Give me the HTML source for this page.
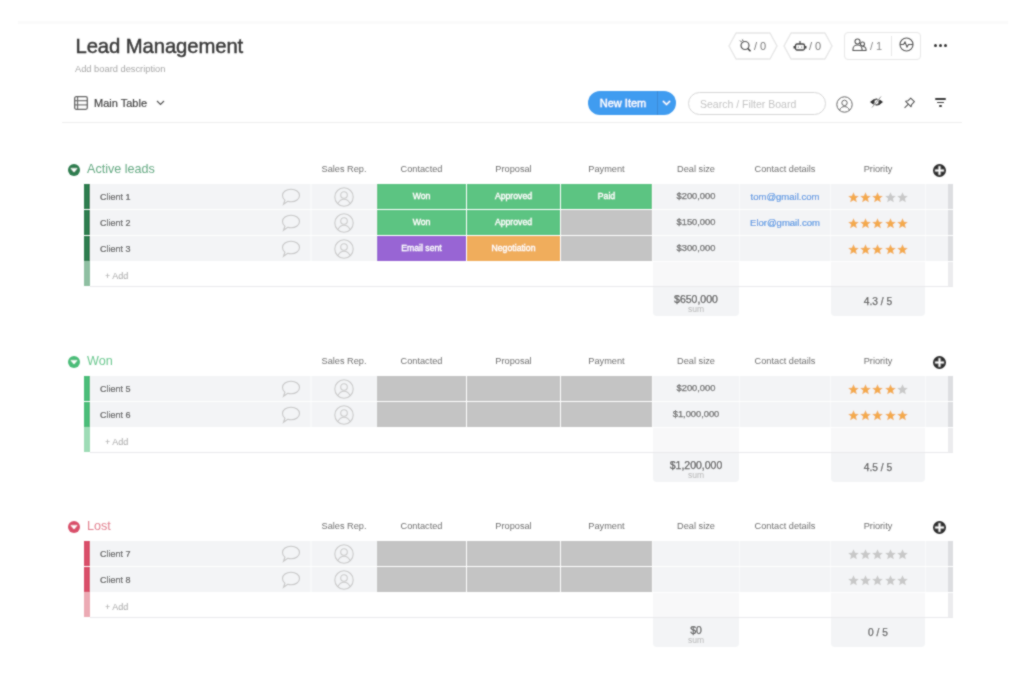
<!DOCTYPE html>
<html><head><meta charset="utf-8"><title>Lead Management</title>
<style>
html,body{margin:0;padding:0;}
body{width:1024px;height:690px;overflow:hidden;position:relative;background:#fff;font-family:"Liberation Sans", sans-serif;}
#wrap{position:absolute;left:0;top:0;width:1024px;height:690px;filter:url(#bl);}
.t{position:absolute;white-space:nowrap;line-height:1;}
.r{position:absolute;}
</style></head><body><svg width="0" height="0" style="position:absolute"><filter id="bl" x="0" y="0" width="100%" height="100%"><feConvolveMatrix order="3" kernelMatrix="1 2 1 2 10 2 1 2 1" edgeMode="duplicate"/></filter></svg><div id="wrap">
<div class="r" style="left:18px;top:21px;width:990px;height:3px;background:#fafafa;"></div>
<div class="t" style="left:75.5px;top:35.82px;font-size:20.3px;color:#3a3a3a;font-weight:400;-webkit-text-stroke:0.45px #3a3a3a;letter-spacing:-0.1px;">Lead Management</div>
<div class="t" style="left:75px;top:65.33px;font-size:9.3px;color:#a8a8a8;font-weight:400;">Add board description</div>
<svg class="r" style="left:728px;top:32px" width="50" height="28" viewBox="0 0 50 28"><polygon points="8,1 42,1 49,14.0 42,27 8,27 1,14.0" fill="none" stroke="#e6e6e6" stroke-width="1.4" stroke-linejoin="round"/></svg>
<svg class="r" style="left:783px;top:32px" width="50" height="28" viewBox="0 0 50 28"><polygon points="8,1 42,1 49,14.0 42,27 8,27 1,14.0" fill="none" stroke="#e6e6e6" stroke-width="1.4" stroke-linejoin="round"/></svg>
<svg class="r" style="left:738px;top:39px" width="14" height="14" viewBox="0 0 14 14"><circle cx="7" cy="6.5" r="4" fill="none" stroke="#555" stroke-width="1.2"/><line x1="9.8" y1="9.5" x2="12.5" y2="12.3" stroke="#444" stroke-width="1.6"/><path d="M3.5 3 L2 1.5 M5 2 L4.5 0.5" stroke="#555" stroke-width="1"/></svg>
<div class="t" style="left:754px;top:40.69px;font-size:11px;color:#777;font-weight:400;">/ 0</div>
<svg class="r" style="left:793px;top:39px" width="14" height="14" viewBox="0 0 14 14"><rect x="2.5" y="5" width="9" height="6" rx="1.5" fill="none" stroke="#444" stroke-width="1.3"/><line x1="7" y1="2" x2="7" y2="5" stroke="#444" stroke-width="1.2"/><rect x="0.5" y="7" width="2" height="2.5" fill="#444"/><rect x="11.5" y="7" width="2" height="2.5" fill="#444"/><circle cx="5.3" cy="8" r="0.6" fill="#444"/><circle cx="8.7" cy="8" r="0.6" fill="#444"/></svg>
<div class="t" style="left:809px;top:40.69px;font-size:11px;color:#777;font-weight:400;">/ 0</div>
<div class="r" style="left:844px;top:31.5px;width:77px;height:28px;background:transparent;border:1px solid #e6e6e6;border-radius:4px;box-sizing:border-box;"></div>
<div class="r" style="left:890.5px;top:35.5px;width:1px;height:20px;background:#e6e6e6;"></div>
<svg class="r" style="left:852px;top:38px" width="15" height="14" viewBox="0 0 15 14"><circle cx="5.5" cy="3.5" r="2.5" fill="none" stroke="#555" stroke-width="1.1"/><path d="M1 12.5 v-1.5 a4.5 4 0 0 1 9 0 v1.5 z" fill="none" stroke="#555" stroke-width="1.1"/><circle cx="10.5" cy="6" r="2" fill="none" stroke="#555" stroke-width="1.1"/><path d="M10 12.5 h4 v-1 a3 3 0 0 0 -3.5 -3" fill="none" stroke="#555" stroke-width="1.1"/></svg>
<div class="t" style="left:870px;top:40.69px;font-size:11px;color:#888;font-weight:400;">/ 1</div>
<svg class="r" style="left:898.5px;top:37px" width="15" height="15" viewBox="0 0 15 15"><circle cx="7.5" cy="7.5" r="6.5" fill="none" stroke="#555" stroke-width="1.1"/><path d="M1 7.5 H4.5 L6 5 L8 10 L9.5 7.5 H14" fill="none" stroke="#555" stroke-width="1.1"/></svg>
<div class="r" style="left:934.0px;top:43.5px;width:3px;height:3px;background:#333;border-radius:50%;"></div>
<div class="r" style="left:939.0px;top:43.5px;width:3px;height:3px;background:#333;border-radius:50%;"></div>
<div class="r" style="left:944.0px;top:43.5px;width:3px;height:3px;background:#333;border-radius:50%;"></div>
<svg class="r" style="left:74px;top:96px" width="14" height="14" viewBox="0 0 14 14"><rect x="0.7" y="0.7" width="12.6" height="12.6" rx="1.5" fill="none" stroke="#666" stroke-width="1.3"/><line x1="0.7" y1="4.7" x2="13.3" y2="4.7" stroke="#666" stroke-width="1.1"/><line x1="0.7" y1="8.9" x2="13.3" y2="8.9" stroke="#666" stroke-width="1.1"/><line x1="3.6" y1="0.7" x2="3.6" y2="13.3" stroke="#666" stroke-width="1.1"/></svg>
<div class="t" style="left:94px;top:98.19px;font-size:11px;color:#444;font-weight:400;-webkit-text-stroke:0.2px #444;">Main Table</div>
<svg class="r" style="left:156px;top:100px" width="9" height="6" viewBox="0 0 9 6"><path d="M1 1 L4.5 4.5 L8 1" fill="none" stroke="#555" stroke-width="1.2"/></svg>
<div class="r" style="left:62px;top:122px;width:900px;height:1px;background:#eeeeee;"></div>
<div class="r" style="left:588px;top:91px;width:88px;height:24px;background:#409cf0;border-radius:12px;"></div>
<div class="r" style="left:656.5px;top:91px;width:1px;height:24px;background:#3a8ad6;"></div>
<div class="t" style="left:589px;width:68px;text-align:center;top:98.19px;font-size:11px;color:#fff;font-weight:400;-webkit-text-stroke:0.3px #fff;">New Item</div>
<svg class="r" style="left:662px;top:100px" width="9" height="6" viewBox="0 0 9 6"><path d="M1 1 L4.5 4.5 L8 1" fill="none" stroke="#fff" stroke-width="1.5"/></svg>
<div class="r" style="left:688px;top:91.5px;width:138px;height:23px;background:#fff;border:1.5px solid #d6d6d6;border-radius:12px;box-sizing:border-box;"></div>
<div class="t" style="left:700px;top:98.61px;font-size:10.5px;color:#c2c2c2;font-weight:400;">Search / Filter Board</div>
<svg class="r" style="left:836px;top:96px" width="17" height="17" viewBox="0 0 17 17"><circle cx="8.5" cy="8.5" r="7.7" fill="none" stroke="#666" stroke-width="1"/><circle cx="8.5" cy="6.9" r="2.7" fill="none" stroke="#666" stroke-width="1"/><path d="M3.6 14.2 C4.5 11.6 6.3 10.6 8.5 10.6 C10.7 10.6 12.5 11.6 13.4 14.2" fill="none" stroke="#666" stroke-width="1"/></svg>
<svg class="r" style="left:869px;top:96px" width="15" height="12" viewBox="0 0 15 12"><path d="M1 6 Q7.5 -1 14 6 Q7.5 13 1 6 Z" fill="#333"/><circle cx="7.5" cy="6" r="2" fill="#fff"/><line x1="3" y1="11.5" x2="12" y2="0.5" stroke="#fff" stroke-width="1.4"/><line x1="3" y1="11.5" x2="12" y2="0.5" stroke="#666" stroke-width="0.7"/></svg>
<svg class="r" style="left:901px;top:96.5px" width="16" height="14" viewBox="0 0 16 14"><g transform="translate(7.1,7.3) rotate(45)"><path d="M-2.6 -6.3 H2.6 V-2.3 L3.9 -0.4 H-3.9 L-2.6 -2.3 Z" fill="none" stroke="#555" stroke-width="1.05" stroke-linejoin="round"/><line x1="0" y1="-0.4" x2="0" y2="5" stroke="#555" stroke-width="1.05"/></g></svg>
<div class="r" style="left:935px;top:98px;width:11px;height:2px;background:#3a3a3a;border-radius:1px;"></div>
<div class="r" style="left:937px;top:101.7px;width:7px;height:1.8px;background:#3a3a3a;border-radius:1px;"></div>
<div class="r" style="left:939px;top:105.2px;width:3px;height:1.8px;background:#3a3a3a;border-radius:1px;"></div>
<svg class="r" style="left:67.5px;top:163.5px" width="12" height="12" viewBox="0 0 12 12"><circle cx="6" cy="6" r="6" fill="#2e7d4f"/><path d="M2.9 4.4 H9.1 L6 8 Z" fill="#fff" stroke="#fff" stroke-width="0.5" stroke-linejoin="round"/></svg>
<div class="t" style="left:87px;top:162.83px;font-size:12.6px;color:#66aa84;font-weight:400;">Active leads</div>
<div class="t" style="left:311px;width:66px;text-align:center;top:165.01px;font-size:9.2px;color:#707070;font-weight:400;">Sales Rep.</div>
<div class="t" style="left:377px;width:89px;text-align:center;top:165.01px;font-size:9.2px;color:#707070;font-weight:400;">Contacted</div>
<div class="t" style="left:467px;width:93px;text-align:center;top:165.01px;font-size:9.2px;color:#707070;font-weight:400;">Proposal</div>
<div class="t" style="left:561px;width:91px;text-align:center;top:165.01px;font-size:9.2px;color:#707070;font-weight:400;">Payment</div>
<div class="t" style="left:653px;width:86px;text-align:center;top:165.01px;font-size:9.2px;color:#707070;font-weight:400;">Deal size</div>
<div class="t" style="left:740px;width:90px;text-align:center;top:165.01px;font-size:9.2px;color:#707070;font-weight:400;">Contact details</div>
<div class="t" style="left:831px;width:94px;text-align:center;top:165.01px;font-size:9.2px;color:#707070;font-weight:400;">Priority</div>
<svg class="r" style="left:933px;top:163.5px" width="13" height="13" viewBox="0 0 13 13"><circle cx="6.5" cy="6.5" r="6.5" fill="#2f2f2f"/><path d="M6.5 2.2 V10.8 M2.2 6.5 H10.8" stroke="#fff" stroke-width="2"/></svg>
<div class="r" style="left:84px;top:184px;width:6px;height:25px;background:#2e7d4f;"></div>
<div class="r" style="left:90px;top:184px;width:287px;height:25px;background:#f3f4f6;"></div>
<div class="r" style="left:310px;top:184px;width:1.5px;height:25px;background:#f8f9fa;"></div>
<div class="r" style="left:377px;top:184px;width:89px;height:25px;background:#5bc482;"></div>
<div class="t" style="left:377px;width:89px;text-align:center;top:192.14px;font-size:8.7px;color:#fff;font-weight:400;-webkit-text-stroke:0.3px #fff;">Won</div>
<div class="r" style="left:467px;top:184px;width:93px;height:25px;background:#5bc482;"></div>
<div class="t" style="left:467px;width:93px;text-align:center;top:192.14px;font-size:8.7px;color:#fff;font-weight:400;-webkit-text-stroke:0.3px #fff;">Approved</div>
<div class="r" style="left:561px;top:184px;width:91px;height:25px;background:#5bc482;"></div>
<div class="t" style="left:561px;width:91px;text-align:center;top:192.14px;font-size:8.7px;color:#fff;font-weight:400;-webkit-text-stroke:0.3px #fff;">Paid</div>
<div class="r" style="left:652px;top:184px;width:296px;height:25px;background:#f3f4f6;"></div>
<div class="r" style="left:652px;top:184px;width:1px;height:25px;background:#fafafb;"></div>
<div class="r" style="left:739px;top:184px;width:1px;height:25px;background:#fafafb;"></div>
<div class="r" style="left:830px;top:184px;width:1px;height:25px;background:#fafafb;"></div>
<div class="r" style="left:925px;top:184px;width:1px;height:25px;background:#fafafb;"></div>
<div class="r" style="left:948px;top:184px;width:5px;height:25px;background:#dddee1;"></div>
<div class="t" style="left:100px;top:192.98px;font-size:9px;color:#4a4a4a;font-weight:400;-webkit-text-stroke:0.2px #4a4a4a;">Client 1</div>
<svg class="r" style="left:281px;top:188px" width="20" height="18" viewBox="0 0 20 18"><path d="M10 1.2 C14.8 1.2 18.5 3.9 18.5 7.5 C18.5 11.1 14.8 13.8 10 13.8 C8.8 13.8 7.7 13.6 6.7 13.3 L2.5 16.3 L3.9 12.2 C2.4 11.1 1.5 9.4 1.5 7.5 C1.5 3.9 5.2 1.2 10 1.2 Z" fill="none" stroke="#c6c6c6" stroke-width="1.1"/></svg>
<svg class="r" style="left:333.5px;top:186.5px" width="20" height="20" viewBox="0 0 20 20"><circle cx="10" cy="10" r="9.2" fill="none" stroke="#cacaca" stroke-width="1.1"/><circle cx="10" cy="8" r="3.3" fill="none" stroke="#cacaca" stroke-width="1.1"/><path d="M4.2 16.3 C5.5 13.3 7.5 12.3 10 12.3 C12.5 12.3 14.5 13.3 15.8 16.3" fill="none" stroke="#cacaca" stroke-width="1.1"/></svg>
<div class="t" style="left:653px;width:86px;text-align:center;top:191.93px;font-size:9.3px;color:#666;font-weight:400;-webkit-text-stroke:0.25px #666;">$200,000</div>
<div class="t" style="left:740px;width:90px;text-align:center;top:191.76px;font-size:9.5px;color:#4a90e2;font-weight:400;-webkit-text-stroke:0.15px #4a90e2;">tom@gmail.com</div>
<svg class="r" style="left:847.5px;top:191.5px" width="11" height="11" viewBox="0 0 11 11"><path d="M5.5 0.3 L7.05 3.75 L10.8 4.1 L7.95 6.6 L8.8 10.3 L5.5 8.35 L2.2 10.3 L3.05 6.6 L0.2 4.1 L3.95 3.75 Z" fill="#f3aa4e"/></svg>
<svg class="r" style="left:859.95px;top:191.5px" width="11" height="11" viewBox="0 0 11 11"><path d="M5.5 0.3 L7.05 3.75 L10.8 4.1 L7.95 6.6 L8.8 10.3 L5.5 8.35 L2.2 10.3 L3.05 6.6 L0.2 4.1 L3.95 3.75 Z" fill="#f3aa4e"/></svg>
<svg class="r" style="left:872.4px;top:191.5px" width="11" height="11" viewBox="0 0 11 11"><path d="M5.5 0.3 L7.05 3.75 L10.8 4.1 L7.95 6.6 L8.8 10.3 L5.5 8.35 L2.2 10.3 L3.05 6.6 L0.2 4.1 L3.95 3.75 Z" fill="#f3aa4e"/></svg>
<svg class="r" style="left:884.85px;top:191.5px" width="11" height="11" viewBox="0 0 11 11"><path d="M5.5 0.3 L7.05 3.75 L10.8 4.1 L7.95 6.6 L8.8 10.3 L5.5 8.35 L2.2 10.3 L3.05 6.6 L0.2 4.1 L3.95 3.75 Z" fill="#c8c8c8"/></svg>
<svg class="r" style="left:897.3px;top:191.5px" width="11" height="11" viewBox="0 0 11 11"><path d="M5.5 0.3 L7.05 3.75 L10.8 4.1 L7.95 6.6 L8.8 10.3 L5.5 8.35 L2.2 10.3 L3.05 6.6 L0.2 4.1 L3.95 3.75 Z" fill="#c8c8c8"/></svg>
<div class="r" style="left:84px;top:210px;width:6px;height:25px;background:#2e7d4f;"></div>
<div class="r" style="left:90px;top:210px;width:287px;height:25px;background:#f3f4f6;"></div>
<div class="r" style="left:310px;top:210px;width:1.5px;height:25px;background:#f8f9fa;"></div>
<div class="r" style="left:377px;top:210px;width:89px;height:25px;background:#5bc482;"></div>
<div class="t" style="left:377px;width:89px;text-align:center;top:218.14px;font-size:8.7px;color:#fff;font-weight:400;-webkit-text-stroke:0.3px #fff;">Won</div>
<div class="r" style="left:467px;top:210px;width:93px;height:25px;background:#5bc482;"></div>
<div class="t" style="left:467px;width:93px;text-align:center;top:218.14px;font-size:8.7px;color:#fff;font-weight:400;-webkit-text-stroke:0.3px #fff;">Approved</div>
<div class="r" style="left:561px;top:210px;width:91px;height:25px;background:#c4c4c4;"></div>
<div class="r" style="left:652px;top:210px;width:296px;height:25px;background:#f3f4f6;"></div>
<div class="r" style="left:652px;top:210px;width:1px;height:25px;background:#fafafb;"></div>
<div class="r" style="left:739px;top:210px;width:1px;height:25px;background:#fafafb;"></div>
<div class="r" style="left:830px;top:210px;width:1px;height:25px;background:#fafafb;"></div>
<div class="r" style="left:925px;top:210px;width:1px;height:25px;background:#fafafb;"></div>
<div class="r" style="left:948px;top:210px;width:5px;height:25px;background:#dddee1;"></div>
<div class="t" style="left:100px;top:218.98px;font-size:9px;color:#4a4a4a;font-weight:400;-webkit-text-stroke:0.2px #4a4a4a;">Client 2</div>
<svg class="r" style="left:281px;top:214px" width="20" height="18" viewBox="0 0 20 18"><path d="M10 1.2 C14.8 1.2 18.5 3.9 18.5 7.5 C18.5 11.1 14.8 13.8 10 13.8 C8.8 13.8 7.7 13.6 6.7 13.3 L2.5 16.3 L3.9 12.2 C2.4 11.1 1.5 9.4 1.5 7.5 C1.5 3.9 5.2 1.2 10 1.2 Z" fill="none" stroke="#c6c6c6" stroke-width="1.1"/></svg>
<svg class="r" style="left:333.5px;top:212.5px" width="20" height="20" viewBox="0 0 20 20"><circle cx="10" cy="10" r="9.2" fill="none" stroke="#cacaca" stroke-width="1.1"/><circle cx="10" cy="8" r="3.3" fill="none" stroke="#cacaca" stroke-width="1.1"/><path d="M4.2 16.3 C5.5 13.3 7.5 12.3 10 12.3 C12.5 12.3 14.5 13.3 15.8 16.3" fill="none" stroke="#cacaca" stroke-width="1.1"/></svg>
<div class="t" style="left:653px;width:86px;text-align:center;top:217.93px;font-size:9.3px;color:#666;font-weight:400;-webkit-text-stroke:0.25px #666;">$150,000</div>
<div class="t" style="left:740px;width:90px;text-align:center;top:217.76px;font-size:9.5px;color:#4a90e2;font-weight:400;-webkit-text-stroke:0.15px #4a90e2;">Elor@gmail.com</div>
<svg class="r" style="left:847.5px;top:217.5px" width="11" height="11" viewBox="0 0 11 11"><path d="M5.5 0.3 L7.05 3.75 L10.8 4.1 L7.95 6.6 L8.8 10.3 L5.5 8.35 L2.2 10.3 L3.05 6.6 L0.2 4.1 L3.95 3.75 Z" fill="#f3aa4e"/></svg>
<svg class="r" style="left:859.95px;top:217.5px" width="11" height="11" viewBox="0 0 11 11"><path d="M5.5 0.3 L7.05 3.75 L10.8 4.1 L7.95 6.6 L8.8 10.3 L5.5 8.35 L2.2 10.3 L3.05 6.6 L0.2 4.1 L3.95 3.75 Z" fill="#f3aa4e"/></svg>
<svg class="r" style="left:872.4px;top:217.5px" width="11" height="11" viewBox="0 0 11 11"><path d="M5.5 0.3 L7.05 3.75 L10.8 4.1 L7.95 6.6 L8.8 10.3 L5.5 8.35 L2.2 10.3 L3.05 6.6 L0.2 4.1 L3.95 3.75 Z" fill="#f3aa4e"/></svg>
<svg class="r" style="left:884.85px;top:217.5px" width="11" height="11" viewBox="0 0 11 11"><path d="M5.5 0.3 L7.05 3.75 L10.8 4.1 L7.95 6.6 L8.8 10.3 L5.5 8.35 L2.2 10.3 L3.05 6.6 L0.2 4.1 L3.95 3.75 Z" fill="#f3aa4e"/></svg>
<svg class="r" style="left:897.3px;top:217.5px" width="11" height="11" viewBox="0 0 11 11"><path d="M5.5 0.3 L7.05 3.75 L10.8 4.1 L7.95 6.6 L8.8 10.3 L5.5 8.35 L2.2 10.3 L3.05 6.6 L0.2 4.1 L3.95 3.75 Z" fill="#f3aa4e"/></svg>
<div class="r" style="left:84px;top:236px;width:6px;height:25px;background:#2e7d4f;"></div>
<div class="r" style="left:90px;top:236px;width:287px;height:25px;background:#f3f4f6;"></div>
<div class="r" style="left:310px;top:236px;width:1.5px;height:25px;background:#f8f9fa;"></div>
<div class="r" style="left:377px;top:236px;width:89px;height:25px;background:#9865d4;"></div>
<div class="t" style="left:377px;width:89px;text-align:center;top:244.14px;font-size:8.7px;color:#fff;font-weight:400;-webkit-text-stroke:0.3px #fff;">Email sent</div>
<div class="r" style="left:467px;top:236px;width:93px;height:25px;background:#f0ad5b;"></div>
<div class="t" style="left:467px;width:93px;text-align:center;top:244.14px;font-size:8.7px;color:#fff;font-weight:400;-webkit-text-stroke:0.3px #fff;">Negotiation</div>
<div class="r" style="left:561px;top:236px;width:91px;height:25px;background:#c4c4c4;"></div>
<div class="r" style="left:652px;top:236px;width:296px;height:25px;background:#f3f4f6;"></div>
<div class="r" style="left:652px;top:236px;width:1px;height:25px;background:#fafafb;"></div>
<div class="r" style="left:739px;top:236px;width:1px;height:25px;background:#fafafb;"></div>
<div class="r" style="left:830px;top:236px;width:1px;height:25px;background:#fafafb;"></div>
<div class="r" style="left:925px;top:236px;width:1px;height:25px;background:#fafafb;"></div>
<div class="r" style="left:948px;top:236px;width:5px;height:25px;background:#dddee1;"></div>
<div class="t" style="left:100px;top:244.98px;font-size:9px;color:#4a4a4a;font-weight:400;-webkit-text-stroke:0.2px #4a4a4a;">Client 3</div>
<svg class="r" style="left:281px;top:240px" width="20" height="18" viewBox="0 0 20 18"><path d="M10 1.2 C14.8 1.2 18.5 3.9 18.5 7.5 C18.5 11.1 14.8 13.8 10 13.8 C8.8 13.8 7.7 13.6 6.7 13.3 L2.5 16.3 L3.9 12.2 C2.4 11.1 1.5 9.4 1.5 7.5 C1.5 3.9 5.2 1.2 10 1.2 Z" fill="none" stroke="#c6c6c6" stroke-width="1.1"/></svg>
<svg class="r" style="left:333.5px;top:238.5px" width="20" height="20" viewBox="0 0 20 20"><circle cx="10" cy="10" r="9.2" fill="none" stroke="#cacaca" stroke-width="1.1"/><circle cx="10" cy="8" r="3.3" fill="none" stroke="#cacaca" stroke-width="1.1"/><path d="M4.2 16.3 C5.5 13.3 7.5 12.3 10 12.3 C12.5 12.3 14.5 13.3 15.8 16.3" fill="none" stroke="#cacaca" stroke-width="1.1"/></svg>
<div class="t" style="left:653px;width:86px;text-align:center;top:243.93px;font-size:9.3px;color:#666;font-weight:400;-webkit-text-stroke:0.25px #666;">$300,000</div>
<svg class="r" style="left:847.5px;top:243.5px" width="11" height="11" viewBox="0 0 11 11"><path d="M5.5 0.3 L7.05 3.75 L10.8 4.1 L7.95 6.6 L8.8 10.3 L5.5 8.35 L2.2 10.3 L3.05 6.6 L0.2 4.1 L3.95 3.75 Z" fill="#f3aa4e"/></svg>
<svg class="r" style="left:859.95px;top:243.5px" width="11" height="11" viewBox="0 0 11 11"><path d="M5.5 0.3 L7.05 3.75 L10.8 4.1 L7.95 6.6 L8.8 10.3 L5.5 8.35 L2.2 10.3 L3.05 6.6 L0.2 4.1 L3.95 3.75 Z" fill="#f3aa4e"/></svg>
<svg class="r" style="left:872.4px;top:243.5px" width="11" height="11" viewBox="0 0 11 11"><path d="M5.5 0.3 L7.05 3.75 L10.8 4.1 L7.95 6.6 L8.8 10.3 L5.5 8.35 L2.2 10.3 L3.05 6.6 L0.2 4.1 L3.95 3.75 Z" fill="#f3aa4e"/></svg>
<svg class="r" style="left:884.85px;top:243.5px" width="11" height="11" viewBox="0 0 11 11"><path d="M5.5 0.3 L7.05 3.75 L10.8 4.1 L7.95 6.6 L8.8 10.3 L5.5 8.35 L2.2 10.3 L3.05 6.6 L0.2 4.1 L3.95 3.75 Z" fill="#f3aa4e"/></svg>
<svg class="r" style="left:897.3px;top:243.5px" width="11" height="11" viewBox="0 0 11 11"><path d="M5.5 0.3 L7.05 3.75 L10.8 4.1 L7.95 6.6 L8.8 10.3 L5.5 8.35 L2.2 10.3 L3.05 6.6 L0.2 4.1 L3.95 3.75 Z" fill="#f3aa4e"/></svg>
<div class="r" style="left:84px;top:261px;width:6px;height:25px;background:#8fbfa2;"></div>
<div class="r" style="left:653px;top:262px;width:86px;height:24px;background:#f8f8f9;"></div>
<div class="r" style="left:831px;top:262px;width:94px;height:24px;background:#f8f8f9;"></div>
<div class="r" style="left:948px;top:262px;width:5px;height:24px;background:#ececee;"></div>
<div class="t" style="left:105px;top:271.68px;font-size:9px;color:#a8a8a8;font-weight:400;">+ Add</div>
<div class="r" style="left:90px;top:286px;width:863px;height:1px;background:#e9e9eb;"></div>
<div class="r" style="left:653px;top:287px;width:86px;height:29px;background:#f3f4f6;border-radius:0 0 4px 4px;"></div>
<div class="r" style="left:831px;top:287px;width:94px;height:29px;background:#f3f4f6;border-radius:0 0 4px 4px;"></div>
<div class="t" style="left:653px;width:86px;text-align:center;top:293.51px;font-size:10.5px;color:#555;font-weight:400;-webkit-text-stroke:0.25px #555;">$650,000</div>
<div class="t" style="left:653px;width:86px;text-align:center;top:304.80px;font-size:8.5px;color:#b5b5b5;font-weight:400;">sum</div>
<div class="t" style="left:831px;width:94px;text-align:center;top:296.87px;font-size:10.2px;color:#555;font-weight:400;-webkit-text-stroke:0.25px #555;">4.3 / 5</div>
<svg class="r" style="left:67.5px;top:355.5px" width="12" height="12" viewBox="0 0 12 12"><circle cx="6" cy="6" r="6" fill="#4cbd79"/><path d="M2.9 4.4 H9.1 L6 8 Z" fill="#fff" stroke="#fff" stroke-width="0.5" stroke-linejoin="round"/></svg>
<div class="t" style="left:87px;top:354.83px;font-size:12.6px;color:#6cc890;font-weight:400;">Won</div>
<div class="t" style="left:311px;width:66px;text-align:center;top:357.01px;font-size:9.2px;color:#707070;font-weight:400;">Sales Rep.</div>
<div class="t" style="left:377px;width:89px;text-align:center;top:357.01px;font-size:9.2px;color:#707070;font-weight:400;">Contacted</div>
<div class="t" style="left:467px;width:93px;text-align:center;top:357.01px;font-size:9.2px;color:#707070;font-weight:400;">Proposal</div>
<div class="t" style="left:561px;width:91px;text-align:center;top:357.01px;font-size:9.2px;color:#707070;font-weight:400;">Payment</div>
<div class="t" style="left:653px;width:86px;text-align:center;top:357.01px;font-size:9.2px;color:#707070;font-weight:400;">Deal size</div>
<div class="t" style="left:740px;width:90px;text-align:center;top:357.01px;font-size:9.2px;color:#707070;font-weight:400;">Contact details</div>
<div class="t" style="left:831px;width:94px;text-align:center;top:357.01px;font-size:9.2px;color:#707070;font-weight:400;">Priority</div>
<svg class="r" style="left:933px;top:355.5px" width="13" height="13" viewBox="0 0 13 13"><circle cx="6.5" cy="6.5" r="6.5" fill="#2f2f2f"/><path d="M6.5 2.2 V10.8 M2.2 6.5 H10.8" stroke="#fff" stroke-width="2"/></svg>
<div class="r" style="left:84px;top:376px;width:6px;height:25px;background:#4cbd79;"></div>
<div class="r" style="left:90px;top:376px;width:287px;height:25px;background:#f3f4f6;"></div>
<div class="r" style="left:310px;top:376px;width:1.5px;height:25px;background:#f8f9fa;"></div>
<div class="r" style="left:377px;top:376px;width:89px;height:25px;background:#c4c4c4;"></div>
<div class="r" style="left:467px;top:376px;width:93px;height:25px;background:#c4c4c4;"></div>
<div class="r" style="left:561px;top:376px;width:91px;height:25px;background:#c4c4c4;"></div>
<div class="r" style="left:652px;top:376px;width:296px;height:25px;background:#f3f4f6;"></div>
<div class="r" style="left:652px;top:376px;width:1px;height:25px;background:#fafafb;"></div>
<div class="r" style="left:739px;top:376px;width:1px;height:25px;background:#fafafb;"></div>
<div class="r" style="left:830px;top:376px;width:1px;height:25px;background:#fafafb;"></div>
<div class="r" style="left:925px;top:376px;width:1px;height:25px;background:#fafafb;"></div>
<div class="r" style="left:948px;top:376px;width:5px;height:25px;background:#dddee1;"></div>
<div class="t" style="left:100px;top:384.98px;font-size:9px;color:#4a4a4a;font-weight:400;-webkit-text-stroke:0.2px #4a4a4a;">Client 5</div>
<svg class="r" style="left:281px;top:380px" width="20" height="18" viewBox="0 0 20 18"><path d="M10 1.2 C14.8 1.2 18.5 3.9 18.5 7.5 C18.5 11.1 14.8 13.8 10 13.8 C8.8 13.8 7.7 13.6 6.7 13.3 L2.5 16.3 L3.9 12.2 C2.4 11.1 1.5 9.4 1.5 7.5 C1.5 3.9 5.2 1.2 10 1.2 Z" fill="none" stroke="#c6c6c6" stroke-width="1.1"/></svg>
<svg class="r" style="left:333.5px;top:378.5px" width="20" height="20" viewBox="0 0 20 20"><circle cx="10" cy="10" r="9.2" fill="none" stroke="#cacaca" stroke-width="1.1"/><circle cx="10" cy="8" r="3.3" fill="none" stroke="#cacaca" stroke-width="1.1"/><path d="M4.2 16.3 C5.5 13.3 7.5 12.3 10 12.3 C12.5 12.3 14.5 13.3 15.8 16.3" fill="none" stroke="#cacaca" stroke-width="1.1"/></svg>
<div class="t" style="left:653px;width:86px;text-align:center;top:383.93px;font-size:9.3px;color:#666;font-weight:400;-webkit-text-stroke:0.25px #666;">$200,000</div>
<svg class="r" style="left:847.5px;top:383.5px" width="11" height="11" viewBox="0 0 11 11"><path d="M5.5 0.3 L7.05 3.75 L10.8 4.1 L7.95 6.6 L8.8 10.3 L5.5 8.35 L2.2 10.3 L3.05 6.6 L0.2 4.1 L3.95 3.75 Z" fill="#f3aa4e"/></svg>
<svg class="r" style="left:859.95px;top:383.5px" width="11" height="11" viewBox="0 0 11 11"><path d="M5.5 0.3 L7.05 3.75 L10.8 4.1 L7.95 6.6 L8.8 10.3 L5.5 8.35 L2.2 10.3 L3.05 6.6 L0.2 4.1 L3.95 3.75 Z" fill="#f3aa4e"/></svg>
<svg class="r" style="left:872.4px;top:383.5px" width="11" height="11" viewBox="0 0 11 11"><path d="M5.5 0.3 L7.05 3.75 L10.8 4.1 L7.95 6.6 L8.8 10.3 L5.5 8.35 L2.2 10.3 L3.05 6.6 L0.2 4.1 L3.95 3.75 Z" fill="#f3aa4e"/></svg>
<svg class="r" style="left:884.85px;top:383.5px" width="11" height="11" viewBox="0 0 11 11"><path d="M5.5 0.3 L7.05 3.75 L10.8 4.1 L7.95 6.6 L8.8 10.3 L5.5 8.35 L2.2 10.3 L3.05 6.6 L0.2 4.1 L3.95 3.75 Z" fill="#f3aa4e"/></svg>
<svg class="r" style="left:897.3px;top:383.5px" width="11" height="11" viewBox="0 0 11 11"><path d="M5.5 0.3 L7.05 3.75 L10.8 4.1 L7.95 6.6 L8.8 10.3 L5.5 8.35 L2.2 10.3 L3.05 6.6 L0.2 4.1 L3.95 3.75 Z" fill="#c8c8c8"/></svg>
<div class="r" style="left:84px;top:402px;width:6px;height:25px;background:#4cbd79;"></div>
<div class="r" style="left:90px;top:402px;width:287px;height:25px;background:#f3f4f6;"></div>
<div class="r" style="left:310px;top:402px;width:1.5px;height:25px;background:#f8f9fa;"></div>
<div class="r" style="left:377px;top:402px;width:89px;height:25px;background:#c4c4c4;"></div>
<div class="r" style="left:467px;top:402px;width:93px;height:25px;background:#c4c4c4;"></div>
<div class="r" style="left:561px;top:402px;width:91px;height:25px;background:#c4c4c4;"></div>
<div class="r" style="left:652px;top:402px;width:296px;height:25px;background:#f3f4f6;"></div>
<div class="r" style="left:652px;top:402px;width:1px;height:25px;background:#fafafb;"></div>
<div class="r" style="left:739px;top:402px;width:1px;height:25px;background:#fafafb;"></div>
<div class="r" style="left:830px;top:402px;width:1px;height:25px;background:#fafafb;"></div>
<div class="r" style="left:925px;top:402px;width:1px;height:25px;background:#fafafb;"></div>
<div class="r" style="left:948px;top:402px;width:5px;height:25px;background:#dddee1;"></div>
<div class="t" style="left:100px;top:410.98px;font-size:9px;color:#4a4a4a;font-weight:400;-webkit-text-stroke:0.2px #4a4a4a;">Client 6</div>
<svg class="r" style="left:281px;top:406px" width="20" height="18" viewBox="0 0 20 18"><path d="M10 1.2 C14.8 1.2 18.5 3.9 18.5 7.5 C18.5 11.1 14.8 13.8 10 13.8 C8.8 13.8 7.7 13.6 6.7 13.3 L2.5 16.3 L3.9 12.2 C2.4 11.1 1.5 9.4 1.5 7.5 C1.5 3.9 5.2 1.2 10 1.2 Z" fill="none" stroke="#c6c6c6" stroke-width="1.1"/></svg>
<svg class="r" style="left:333.5px;top:404.5px" width="20" height="20" viewBox="0 0 20 20"><circle cx="10" cy="10" r="9.2" fill="none" stroke="#cacaca" stroke-width="1.1"/><circle cx="10" cy="8" r="3.3" fill="none" stroke="#cacaca" stroke-width="1.1"/><path d="M4.2 16.3 C5.5 13.3 7.5 12.3 10 12.3 C12.5 12.3 14.5 13.3 15.8 16.3" fill="none" stroke="#cacaca" stroke-width="1.1"/></svg>
<div class="t" style="left:653px;width:86px;text-align:center;top:409.93px;font-size:9.3px;color:#666;font-weight:400;-webkit-text-stroke:0.25px #666;">$1,000,000</div>
<svg class="r" style="left:847.5px;top:409.5px" width="11" height="11" viewBox="0 0 11 11"><path d="M5.5 0.3 L7.05 3.75 L10.8 4.1 L7.95 6.6 L8.8 10.3 L5.5 8.35 L2.2 10.3 L3.05 6.6 L0.2 4.1 L3.95 3.75 Z" fill="#f3aa4e"/></svg>
<svg class="r" style="left:859.95px;top:409.5px" width="11" height="11" viewBox="0 0 11 11"><path d="M5.5 0.3 L7.05 3.75 L10.8 4.1 L7.95 6.6 L8.8 10.3 L5.5 8.35 L2.2 10.3 L3.05 6.6 L0.2 4.1 L3.95 3.75 Z" fill="#f3aa4e"/></svg>
<svg class="r" style="left:872.4px;top:409.5px" width="11" height="11" viewBox="0 0 11 11"><path d="M5.5 0.3 L7.05 3.75 L10.8 4.1 L7.95 6.6 L8.8 10.3 L5.5 8.35 L2.2 10.3 L3.05 6.6 L0.2 4.1 L3.95 3.75 Z" fill="#f3aa4e"/></svg>
<svg class="r" style="left:884.85px;top:409.5px" width="11" height="11" viewBox="0 0 11 11"><path d="M5.5 0.3 L7.05 3.75 L10.8 4.1 L7.95 6.6 L8.8 10.3 L5.5 8.35 L2.2 10.3 L3.05 6.6 L0.2 4.1 L3.95 3.75 Z" fill="#f3aa4e"/></svg>
<svg class="r" style="left:897.3px;top:409.5px" width="11" height="11" viewBox="0 0 11 11"><path d="M5.5 0.3 L7.05 3.75 L10.8 4.1 L7.95 6.6 L8.8 10.3 L5.5 8.35 L2.2 10.3 L3.05 6.6 L0.2 4.1 L3.95 3.75 Z" fill="#f3aa4e"/></svg>
<div class="r" style="left:84px;top:427px;width:6px;height:25px;background:#9edcb6;"></div>
<div class="r" style="left:653px;top:428px;width:86px;height:24px;background:#f8f8f9;"></div>
<div class="r" style="left:831px;top:428px;width:94px;height:24px;background:#f8f8f9;"></div>
<div class="r" style="left:948px;top:428px;width:5px;height:24px;background:#ececee;"></div>
<div class="t" style="left:105px;top:437.68px;font-size:9px;color:#a8a8a8;font-weight:400;">+ Add</div>
<div class="r" style="left:90px;top:452px;width:863px;height:1px;background:#e9e9eb;"></div>
<div class="r" style="left:653px;top:453px;width:86px;height:29px;background:#f3f4f6;border-radius:0 0 4px 4px;"></div>
<div class="r" style="left:831px;top:453px;width:94px;height:29px;background:#f3f4f6;border-radius:0 0 4px 4px;"></div>
<div class="t" style="left:653px;width:86px;text-align:center;top:459.51px;font-size:10.5px;color:#555;font-weight:400;-webkit-text-stroke:0.25px #555;">$1,200,000</div>
<div class="t" style="left:653px;width:86px;text-align:center;top:470.80px;font-size:8.5px;color:#b5b5b5;font-weight:400;">sum</div>
<div class="t" style="left:831px;width:94px;text-align:center;top:462.87px;font-size:10.2px;color:#555;font-weight:400;-webkit-text-stroke:0.25px #555;">4.5 / 5</div>
<svg class="r" style="left:67.5px;top:520.5px" width="12" height="12" viewBox="0 0 12 12"><circle cx="6" cy="6" r="6" fill="#d9506a"/><path d="M2.9 4.4 H9.1 L6 8 Z" fill="#fff" stroke="#fff" stroke-width="0.5" stroke-linejoin="round"/></svg>
<div class="t" style="left:87px;top:519.83px;font-size:12.6px;color:#e2808f;font-weight:400;">Lost</div>
<div class="t" style="left:311px;width:66px;text-align:center;top:522.01px;font-size:9.2px;color:#707070;font-weight:400;">Sales Rep.</div>
<div class="t" style="left:377px;width:89px;text-align:center;top:522.01px;font-size:9.2px;color:#707070;font-weight:400;">Contacted</div>
<div class="t" style="left:467px;width:93px;text-align:center;top:522.01px;font-size:9.2px;color:#707070;font-weight:400;">Proposal</div>
<div class="t" style="left:561px;width:91px;text-align:center;top:522.01px;font-size:9.2px;color:#707070;font-weight:400;">Payment</div>
<div class="t" style="left:653px;width:86px;text-align:center;top:522.01px;font-size:9.2px;color:#707070;font-weight:400;">Deal size</div>
<div class="t" style="left:740px;width:90px;text-align:center;top:522.01px;font-size:9.2px;color:#707070;font-weight:400;">Contact details</div>
<div class="t" style="left:831px;width:94px;text-align:center;top:522.01px;font-size:9.2px;color:#707070;font-weight:400;">Priority</div>
<svg class="r" style="left:933px;top:520.5px" width="13" height="13" viewBox="0 0 13 13"><circle cx="6.5" cy="6.5" r="6.5" fill="#2f2f2f"/><path d="M6.5 2.2 V10.8 M2.2 6.5 H10.8" stroke="#fff" stroke-width="2"/></svg>
<div class="r" style="left:84px;top:541px;width:6px;height:25px;background:#d9506a;"></div>
<div class="r" style="left:90px;top:541px;width:287px;height:25px;background:#f3f4f6;"></div>
<div class="r" style="left:310px;top:541px;width:1.5px;height:25px;background:#f8f9fa;"></div>
<div class="r" style="left:377px;top:541px;width:89px;height:25px;background:#c4c4c4;"></div>
<div class="r" style="left:467px;top:541px;width:93px;height:25px;background:#c4c4c4;"></div>
<div class="r" style="left:561px;top:541px;width:91px;height:25px;background:#c4c4c4;"></div>
<div class="r" style="left:652px;top:541px;width:296px;height:25px;background:#f3f4f6;"></div>
<div class="r" style="left:652px;top:541px;width:1px;height:25px;background:#fafafb;"></div>
<div class="r" style="left:739px;top:541px;width:1px;height:25px;background:#fafafb;"></div>
<div class="r" style="left:830px;top:541px;width:1px;height:25px;background:#fafafb;"></div>
<div class="r" style="left:925px;top:541px;width:1px;height:25px;background:#fafafb;"></div>
<div class="r" style="left:948px;top:541px;width:5px;height:25px;background:#dddee1;"></div>
<div class="t" style="left:100px;top:549.98px;font-size:9px;color:#4a4a4a;font-weight:400;-webkit-text-stroke:0.2px #4a4a4a;">Client 7</div>
<svg class="r" style="left:281px;top:545px" width="20" height="18" viewBox="0 0 20 18"><path d="M10 1.2 C14.8 1.2 18.5 3.9 18.5 7.5 C18.5 11.1 14.8 13.8 10 13.8 C8.8 13.8 7.7 13.6 6.7 13.3 L2.5 16.3 L3.9 12.2 C2.4 11.1 1.5 9.4 1.5 7.5 C1.5 3.9 5.2 1.2 10 1.2 Z" fill="none" stroke="#c6c6c6" stroke-width="1.1"/></svg>
<svg class="r" style="left:333.5px;top:543.5px" width="20" height="20" viewBox="0 0 20 20"><circle cx="10" cy="10" r="9.2" fill="none" stroke="#cacaca" stroke-width="1.1"/><circle cx="10" cy="8" r="3.3" fill="none" stroke="#cacaca" stroke-width="1.1"/><path d="M4.2 16.3 C5.5 13.3 7.5 12.3 10 12.3 C12.5 12.3 14.5 13.3 15.8 16.3" fill="none" stroke="#cacaca" stroke-width="1.1"/></svg>
<svg class="r" style="left:847.5px;top:548.5px" width="11" height="11" viewBox="0 0 11 11"><path d="M5.5 0.3 L7.05 3.75 L10.8 4.1 L7.95 6.6 L8.8 10.3 L5.5 8.35 L2.2 10.3 L3.05 6.6 L0.2 4.1 L3.95 3.75 Z" fill="#c8c8c8"/></svg>
<svg class="r" style="left:859.95px;top:548.5px" width="11" height="11" viewBox="0 0 11 11"><path d="M5.5 0.3 L7.05 3.75 L10.8 4.1 L7.95 6.6 L8.8 10.3 L5.5 8.35 L2.2 10.3 L3.05 6.6 L0.2 4.1 L3.95 3.75 Z" fill="#c8c8c8"/></svg>
<svg class="r" style="left:872.4px;top:548.5px" width="11" height="11" viewBox="0 0 11 11"><path d="M5.5 0.3 L7.05 3.75 L10.8 4.1 L7.95 6.6 L8.8 10.3 L5.5 8.35 L2.2 10.3 L3.05 6.6 L0.2 4.1 L3.95 3.75 Z" fill="#c8c8c8"/></svg>
<svg class="r" style="left:884.85px;top:548.5px" width="11" height="11" viewBox="0 0 11 11"><path d="M5.5 0.3 L7.05 3.75 L10.8 4.1 L7.95 6.6 L8.8 10.3 L5.5 8.35 L2.2 10.3 L3.05 6.6 L0.2 4.1 L3.95 3.75 Z" fill="#c8c8c8"/></svg>
<svg class="r" style="left:897.3px;top:548.5px" width="11" height="11" viewBox="0 0 11 11"><path d="M5.5 0.3 L7.05 3.75 L10.8 4.1 L7.95 6.6 L8.8 10.3 L5.5 8.35 L2.2 10.3 L3.05 6.6 L0.2 4.1 L3.95 3.75 Z" fill="#c8c8c8"/></svg>
<div class="r" style="left:84px;top:567px;width:6px;height:25px;background:#d9506a;"></div>
<div class="r" style="left:90px;top:567px;width:287px;height:25px;background:#f3f4f6;"></div>
<div class="r" style="left:310px;top:567px;width:1.5px;height:25px;background:#f8f9fa;"></div>
<div class="r" style="left:377px;top:567px;width:89px;height:25px;background:#c4c4c4;"></div>
<div class="r" style="left:467px;top:567px;width:93px;height:25px;background:#c4c4c4;"></div>
<div class="r" style="left:561px;top:567px;width:91px;height:25px;background:#c4c4c4;"></div>
<div class="r" style="left:652px;top:567px;width:296px;height:25px;background:#f3f4f6;"></div>
<div class="r" style="left:652px;top:567px;width:1px;height:25px;background:#fafafb;"></div>
<div class="r" style="left:739px;top:567px;width:1px;height:25px;background:#fafafb;"></div>
<div class="r" style="left:830px;top:567px;width:1px;height:25px;background:#fafafb;"></div>
<div class="r" style="left:925px;top:567px;width:1px;height:25px;background:#fafafb;"></div>
<div class="r" style="left:948px;top:567px;width:5px;height:25px;background:#dddee1;"></div>
<div class="t" style="left:100px;top:575.98px;font-size:9px;color:#4a4a4a;font-weight:400;-webkit-text-stroke:0.2px #4a4a4a;">Client 8</div>
<svg class="r" style="left:281px;top:571px" width="20" height="18" viewBox="0 0 20 18"><path d="M10 1.2 C14.8 1.2 18.5 3.9 18.5 7.5 C18.5 11.1 14.8 13.8 10 13.8 C8.8 13.8 7.7 13.6 6.7 13.3 L2.5 16.3 L3.9 12.2 C2.4 11.1 1.5 9.4 1.5 7.5 C1.5 3.9 5.2 1.2 10 1.2 Z" fill="none" stroke="#c6c6c6" stroke-width="1.1"/></svg>
<svg class="r" style="left:333.5px;top:569.5px" width="20" height="20" viewBox="0 0 20 20"><circle cx="10" cy="10" r="9.2" fill="none" stroke="#cacaca" stroke-width="1.1"/><circle cx="10" cy="8" r="3.3" fill="none" stroke="#cacaca" stroke-width="1.1"/><path d="M4.2 16.3 C5.5 13.3 7.5 12.3 10 12.3 C12.5 12.3 14.5 13.3 15.8 16.3" fill="none" stroke="#cacaca" stroke-width="1.1"/></svg>
<svg class="r" style="left:847.5px;top:574.5px" width="11" height="11" viewBox="0 0 11 11"><path d="M5.5 0.3 L7.05 3.75 L10.8 4.1 L7.95 6.6 L8.8 10.3 L5.5 8.35 L2.2 10.3 L3.05 6.6 L0.2 4.1 L3.95 3.75 Z" fill="#c8c8c8"/></svg>
<svg class="r" style="left:859.95px;top:574.5px" width="11" height="11" viewBox="0 0 11 11"><path d="M5.5 0.3 L7.05 3.75 L10.8 4.1 L7.95 6.6 L8.8 10.3 L5.5 8.35 L2.2 10.3 L3.05 6.6 L0.2 4.1 L3.95 3.75 Z" fill="#c8c8c8"/></svg>
<svg class="r" style="left:872.4px;top:574.5px" width="11" height="11" viewBox="0 0 11 11"><path d="M5.5 0.3 L7.05 3.75 L10.8 4.1 L7.95 6.6 L8.8 10.3 L5.5 8.35 L2.2 10.3 L3.05 6.6 L0.2 4.1 L3.95 3.75 Z" fill="#c8c8c8"/></svg>
<svg class="r" style="left:884.85px;top:574.5px" width="11" height="11" viewBox="0 0 11 11"><path d="M5.5 0.3 L7.05 3.75 L10.8 4.1 L7.95 6.6 L8.8 10.3 L5.5 8.35 L2.2 10.3 L3.05 6.6 L0.2 4.1 L3.95 3.75 Z" fill="#c8c8c8"/></svg>
<svg class="r" style="left:897.3px;top:574.5px" width="11" height="11" viewBox="0 0 11 11"><path d="M5.5 0.3 L7.05 3.75 L10.8 4.1 L7.95 6.6 L8.8 10.3 L5.5 8.35 L2.2 10.3 L3.05 6.6 L0.2 4.1 L3.95 3.75 Z" fill="#c8c8c8"/></svg>
<div class="r" style="left:84px;top:592px;width:6px;height:25px;background:#ecaab4;"></div>
<div class="r" style="left:653px;top:593px;width:86px;height:24px;background:#f8f8f9;"></div>
<div class="r" style="left:831px;top:593px;width:94px;height:24px;background:#f8f8f9;"></div>
<div class="r" style="left:948px;top:593px;width:5px;height:24px;background:#ececee;"></div>
<div class="t" style="left:105px;top:602.68px;font-size:9px;color:#a8a8a8;font-weight:400;">+ Add</div>
<div class="r" style="left:90px;top:617px;width:863px;height:1px;background:#e9e9eb;"></div>
<div class="r" style="left:653px;top:618px;width:86px;height:29px;background:#f3f4f6;border-radius:0 0 4px 4px;"></div>
<div class="r" style="left:831px;top:618px;width:94px;height:29px;background:#f3f4f6;border-radius:0 0 4px 4px;"></div>
<div class="t" style="left:653px;width:86px;text-align:center;top:624.51px;font-size:10.5px;color:#555;font-weight:400;-webkit-text-stroke:0.25px #555;">$0</div>
<div class="t" style="left:653px;width:86px;text-align:center;top:635.80px;font-size:8.5px;color:#b5b5b5;font-weight:400;">sum</div>
<div class="t" style="left:831px;width:94px;text-align:center;top:627.87px;font-size:10.2px;color:#555;font-weight:400;-webkit-text-stroke:0.25px #555;">0 / 5</div>
</div></body></html>
